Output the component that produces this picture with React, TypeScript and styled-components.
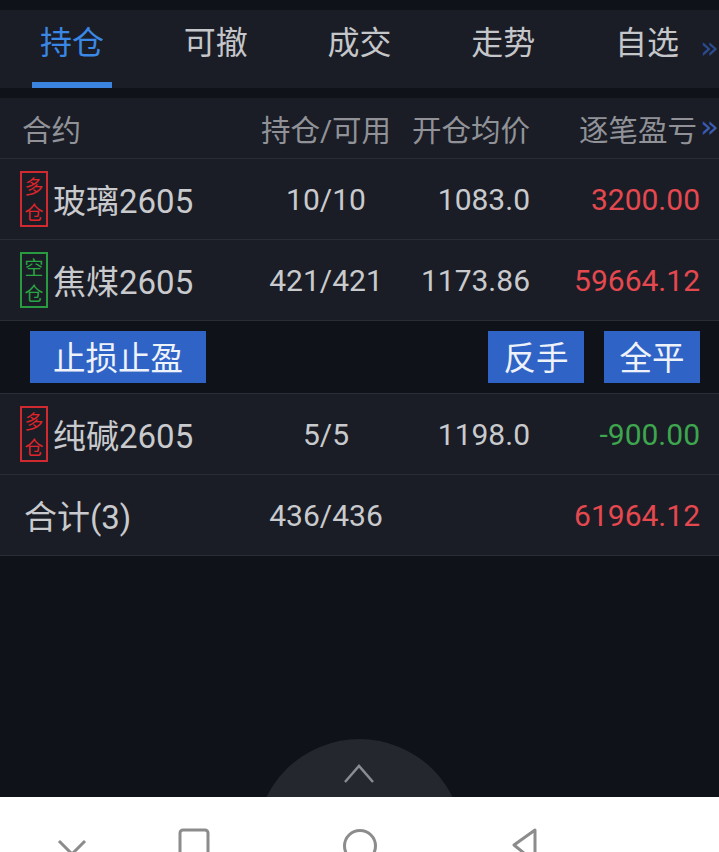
import React from 'react';
import styled, { createGlobalStyle, css } from 'styled-components';

const GlobalStyle = createGlobalStyle`
  html, body {
    margin: 0;
    padding: 0;
    background: #0f1219;
  }
  body {
    font-family: Roboto, "Noto Sans CJK SC", sans-serif;
  }
`

const C = {
  page: '#0f1219',
  panel: '#1a1d25',
  line: '#2a2d35',
  text: '#c9cacd',
  muted: '#909298',
  blue: '#3a87e6',
  red: '#e5484f',
  green: '#3da64e',
  button: '#2f63c6',
}

const Screen = styled.div`
  display: flex;
  flex-direction: column;
  width: 719px;
  height: 852px;
  overflow: hidden;
  background: ${C.page};
  padding-top: 10px;
  box-sizing: border-box;
`

const TabBar = styled.div`
  position: relative;
  display: grid;
  grid-template-columns: repeat(5, 1fr);
  height: 78px;
  background: ${C.panel};
`

const Tab = styled.div<{ $active?: boolean }>`
  position: relative;
  display: flex;
  align-items: center;
  justify-content: center;
  padding-bottom: 19px;
  font-size: 32px;
  color: ${p => (p.$active ? C.blue : '#c4c6ca')};
  ${p => p.$active && css`
    &::after {
      content: '';
      position: absolute;
      bottom: 0;
      left: 50%;
      width: 80px;
      height: 6px;
      margin-left: -40px;
      background: #3a84df;
    }
  `}
`

const More = styled.span<{ $dim?: boolean }>`
  position: absolute;
  right: 0;
  top: 50%;
  transform: translateY(-56%);
  font-family: "DejaVu Sans", sans-serif;
  font-size: 31px;
  line-height: 1;
  color: ${p => (p.$dim ? '#2b4c8f' : '#3a5cb2')};
`

const Table = styled.div`
  margin-top: 10px;
  display: flex;
  flex-direction: column;
`

const Row = styled.div<{ $head?: boolean }>`
  position: relative;
  display: grid;
  grid-template-columns: 226px 160px 124px 170px;
  align-items: center;
  height: ${p => (p.$head ? 60 : 80)}px;
  padding: 0 19px 0 20px;
  background: ${C.panel};
  border-bottom: 1px solid ${C.line};
  font-size: ${p => (p.$head ? 29.5 : 30)}px;
  color: ${p => (p.$head ? C.muted : C.text)};
`

const NameCell = styled.div<{ $indent?: number }>`
  display: flex;
  align-items: center;
  gap: 5px;
  padding-left: ${p => p.$indent || 0}px;
  white-space: nowrap;
`

const Name = styled.span`
  font-size: 33px;
`

const Tag = styled.span<{ $side: 'long' | 'short' }>`
  display: flex;
  flex-direction: column;
  align-items: center;
  justify-content: center;
  width: 28px;
  height: 56px;
  box-sizing: border-box;
  border: 2px solid ${p => (p.$side === 'long' ? '#cf2a2f' : '#2a9a41')};
  color: ${p => (p.$side === 'long' ? '#e0242b' : '#2aa543')};
  font-family: "Noto Sans CJK SC", sans-serif;
  font-size: 19px;
  line-height: 26px;
`

const TagChar = styled.span`
  display: block;
  height: 26px;
  overflow: hidden;
`

const Cell = styled.div<{ $align: 'center' | 'right'; $tone?: 'up' | 'down'; $inset?: number }>`
  text-align: ${p => p.$align};
  padding-right: ${p => p.$inset || 0}px;
  white-space: nowrap;
  color: ${p => (p.$tone === 'up' ? C.red : p.$tone === 'down' ? C.green : 'inherit')};
`

const ActionBar = styled.div`
  display: flex;
  align-items: center;
  gap: 20px;
  height: 72px;
  padding: 0 19px 0 30px;
  background: ${C.page};
  border-bottom: 1px solid ${C.line};
`

const ActionButton = styled.button<{ $wide?: boolean; $push?: boolean }>`
  height: 52px;
  width: ${p => (p.$wide ? 176 : 96)}px;
  margin-left: ${p => (p.$push ? 'auto' : '0')};
  padding: 0 0 2px;
  border: none;
  background: ${C.button};
  color: #eef2fa;
  font-family: "Noto Sans CJK SC", sans-serif;
  font-size: 32.5px;
  line-height: 50px;
`

const Empty = styled.div`
  position: relative;
  flex: 1;
  overflow: hidden;
`

const Dome = styled.div`
  position: absolute;
  left: 50%;
  bottom: -149px;
  width: 207px;
  height: 207px;
  margin-left: -104px;
  border-radius: 50%;
  background: #25272e;
  display: flex;
  justify-content: center;
  padding-top: 25px;
  box-sizing: border-box;
`

const NavBar = styled.div`
  display: grid;
  grid-template-columns: 143px 101px 232px 98px;
  height: 55px;
  overflow: hidden;
  background: #ffffff;
`

const NavSlot = styled.div`
  display: flex;
  justify-content: center;
  padding-top: 31px;
`

type Position = {
  name: string
  side: 'long' | 'short'
  qty: string
  price: string
  pnl: string
}

const positions: Position[] = [
  { name: '玻璃2605', side: 'long', qty: '10/10', price: '1083.0', pnl: '3200.00' },
  { name: '焦煤2605', side: 'short', qty: '421/421', price: '1173.86', pnl: '59664.12' },
  { name: '纯碱2605', side: 'long', qty: '5/5', price: '1198.0', pnl: '-900.00' },
]

const tabs = ['持仓', '可撤', '成交', '走势', '自选']

const tone = (v: string) => (v.startsWith('-') ? 'down' : 'up')

function PositionRow({ p }: { p: Position }) {
  return (
    <Row>
      <NameCell>
        <Tag $side={p.side}>
          <TagChar>{p.side === 'long' ? '多' : '空'}</TagChar>
          <TagChar>仓</TagChar>
        </Tag>
        <Name>{p.name}</Name>
      </NameCell>
      <Cell $align="center">{p.qty}</Cell>
      <Cell $align="right">{p.price}</Cell>
      <Cell $align="right" $tone={tone(p.pnl)}>{p.pnl}</Cell>
    </Row>
  )
}

export default function App() {
  return (
    <Screen>
      <GlobalStyle />
      <TabBar>
        {tabs.map((t, i) => (
          <Tab key={t} $active={i === 0}>{t}</Tab>
        ))}
        <More $dim>»</More>
      </TabBar>

      <Table>
        <Row $head>
          <NameCell $indent={2}>合约</NameCell>
          <Cell $align="center">持仓/可用</Cell>
          <Cell $align="right">开仓均价</Cell>
          <Cell $align="right" $inset={3}>逐笔盈亏</Cell>
          <More>»</More>
        </Row>
        <PositionRow p={positions[0]} />
        <PositionRow p={positions[1]} />
        <ActionBar>
          <ActionButton $wide>止损止盈</ActionButton>
          <ActionButton $push>反手</ActionButton>
          <ActionButton>全平</ActionButton>
        </ActionBar>
        <PositionRow p={positions[2]} />
        <Row>
          <NameCell $indent={4}><Name>合计(3)</Name></NameCell>
          <Cell $align="center">436/436</Cell>
          <Cell $align="right"></Cell>
          <Cell $align="right" $tone="up">61964.12</Cell>
        </Row>
      </Table>

      <Empty>
        <Dome>
          <svg width="32" height="20" viewBox="0 0 32 20">
            <path d="M2 18 L16 2 L30 18" fill="none" stroke="#8a8c92" strokeWidth="2.5" />
          </svg>
        </Dome>
      </Empty>

      <NavBar>
        <NavSlot>
          <svg width="30" height="30" viewBox="0 0 30 30">
            <path d="M2 13 L15 26 L28 13" fill="none" stroke="#8c8c8c" strokeWidth="3" />
          </svg>
        </NavSlot>
        <NavSlot>
          <svg width="34" height="30" viewBox="0 0 34 30">
            <rect x="3" y="2" width="28" height="34" rx="3" fill="none" stroke="#8c8c8c" strokeWidth="3" />
          </svg>
        </NavSlot>
        <NavSlot>
          <svg width="36" height="30" viewBox="0 0 36 30">
            <circle cx="18" cy="18" r="15.5" fill="none" stroke="#8c8c8c" strokeWidth="3" />
          </svg>
        </NavSlot>
        <NavSlot>
          <svg width="30" height="30" viewBox="0 0 30 30">
            <path d="M25 2 L25 34 L4 17 Z" fill="none" stroke="#8c8c8c" strokeWidth="3" strokeLinejoin="round" />
          </svg>
        </NavSlot>
      </NavBar>
    </Screen>
  )
}
